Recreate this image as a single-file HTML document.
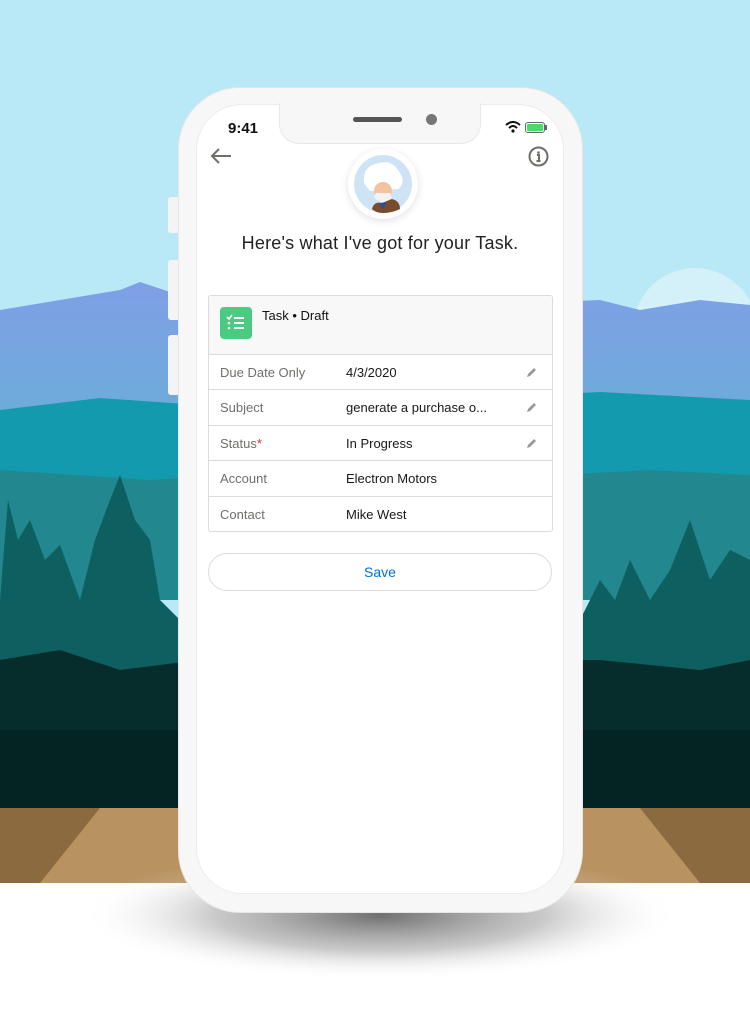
<!DOCTYPE html>
<html><head><meta charset="utf-8"><style>
*{margin:0;padding:0;box-sizing:border-box}
body{width:750px;height:1012px;overflow:hidden;background:#fff;font-family:"Liberation Sans",sans-serif;position:relative}
.abs{position:absolute}
.row{position:absolute;left:0;right:0;height:36px;border-top:1px solid #dddbda;font-size:13px}
.row .l{position:absolute;left:11px;top:10px;color:#706e6b}
.row .v{position:absolute;left:137px;top:10px;color:#181818}
.row svg{position:absolute;right:14px;top:11px}
</style></head><body>
<svg class="abs" style="left:0;top:0" width="750" height="1012">
<defs>
<radialGradient id="sh" cx="50%" cy="50%" r="50%"><stop offset="0" stop-color="#555" stop-opacity=".85"/><stop offset=".55" stop-color="#888" stop-opacity=".45"/><stop offset="1" stop-color="#fff" stop-opacity="0"/></radialGradient>
<linearGradient id="m1" x1="0" y1="0" x2="0" y2="1"><stop offset="0" stop-color="#7f9fe6"/><stop offset="1" stop-color="#6aaed8"/></linearGradient>
</defs>
<rect width="750" height="883" fill="#b9e9f6"/>
<circle cx="695" cy="330" r="62" fill="#d4f1fa"/>
<path d="M0 310 L60 300 L120 290 L140 282 L170 292 L260 310 L380 300 L480 305 L600 300 L640 310 L700 300 L750 305 L750 440 L0 440Z" fill="url(#m1)"/>
<path d="M0 410 L100 398 L200 405 L300 395 L450 400 L600 392 L750 400 L750 520 L0 520Z" fill="#149aae"/>
<path d="M0 470 L150 480 L300 470 L500 478 L650 470 L750 475 L750 600 L0 600Z" fill="#22878f"/>
<path d="M0 600 L8 500 L18 540 L30 520 L45 560 L60 545 L80 600 L95 540 L110 500 L120 475 L135 520 L150 540 L160 600 L180 620 L180 700 L0 700Z" fill="#0e5f60"/>
<path d="M580 620 L600 580 L615 600 L630 560 L650 600 L670 570 L690 520 L710 580 L730 550 L750 560 L750 700 L580 700Z" fill="#0e5f60"/>
<path d="M0 660 L60 650 L120 670 L200 660 L600 660 L700 670 L750 660 L750 810 L0 810Z" fill="#062c2c"/>
<path d="M0 730 L750 730 L750 810 L0 810Z" fill="#042424"/>
<rect y="808" width="750" height="75" fill="#b8925f"/>
<path d="M0 808 L100 808 L40 883 L0 883Z" fill="#8c6a40"/>
<path d="M640 808 L750 808 L750 883 L700 883Z" fill="#8c6a40"/>
<ellipse cx="380" cy="915" rx="300" ry="65" fill="url(#sh)"/>
</svg>
<div class="abs" style="left:168px;top:197px;width:12px;height:36px;background:#f4f4f4;border-radius:3px"></div>
<div class="abs" style="left:168px;top:260px;width:12px;height:60px;background:#f4f4f4;border-radius:3px"></div>
<div class="abs" style="left:168px;top:335px;width:12px;height:60px;background:#f4f4f4;border-radius:3px"></div>
<div class="abs" style="left:178px;top:87px;width:405px;height:826px;background:#f7f7f7;border-radius:62px;border:1px solid #e6e6e6"></div>
<div class="abs" style="left:196px;top:104px;width:368px;height:790px;background:#fff;border-radius:46px;border:1px solid #ececec"></div>
<div class="abs" style="left:279px;top:103px;width:202px;height:41px;background:#f7f7f7;border-radius:0 0 20px 20px;border:1px solid #e8e8e8;border-top:none"></div>
<div class="abs" style="left:353px;top:117px;width:49px;height:5px;background:#555;border-radius:3px"></div>
<div class="abs" style="left:426px;top:114px;width:11px;height:11px;background:#777;border-radius:50%"></div>
<div class="abs" style="left:228px;top:120px;font-size:15px;font-weight:bold;color:#111">9:41</div>
<svg class="abs" style="left:505px;top:121px" width="16" height="12" viewBox="0 0 16 12"><path d="M1 4 Q8 -2 15 4" stroke="#111" stroke-width="2" fill="none"/><path d="M4 7 Q8 3 12 7" stroke="#111" stroke-width="2" fill="none"/><circle cx="8" cy="10" r="1.6" fill="#111"/></svg>
<div class="abs" style="left:525px;top:122px;width:20px;height:11px;border:1px solid #666;border-radius:3px;padding:1px"><div style="width:100%;height:100%;background:#4cd964;border-radius:1px"></div></div>
<div class="abs" style="left:545px;top:125px;width:2px;height:5px;background:#666"></div>
<svg class="abs" style="left:209px;top:147px" width="24" height="18" viewBox="0 0 24 18"><path d="M22 9H3M10 2L3 9l7 7" stroke="#706e6b" stroke-width="2" fill="none"/></svg>
<svg class="abs" style="left:528px;top:146px" width="21" height="21" viewBox="0 0 21 21"><circle cx="10.5" cy="10.5" r="9" stroke="#706e6b" stroke-width="2" fill="none"/><circle cx="10.5" cy="6.5" r="1.3" fill="#706e6b"/><path d="M9 9h2v6M8.5 15h4" stroke="#706e6b" stroke-width="2" fill="none"/></svg>
<div class="abs" style="left:348px;top:149px;width:70px;height:70px;border-radius:50%;background:#fff;box-shadow:0 2px 8px rgba(0,0,0,.12)"></div>
<svg class="abs" style="left:352px;top:153px" width="62" height="62" viewBox="0 0 62 62"><circle cx="31" cy="31" r="29" fill="#cfe3f7"/><path d="M12 30 Q10 12 28 10 Q40 6 48 20 Q54 30 46 36 L18 38Z" fill="#fff"/><ellipse cx="31" cy="38" rx="9" ry="9" fill="#f2c3a0"/><path d="M22 44 Q31 54 40 44 L38 40 L24 40Z" fill="#f3f3f3"/><path d="M20 56 Q22 48 30 50 L40 46 Q48 48 48 56 Q40 60 31 60 Q24 60 20 56Z" fill="#7a4b2a"/><path d="M27 50 L31 56 L35 50Z" fill="#2a4d9c"/></svg>
<div class="abs" style="left:197px;top:233px;width:366px;text-align:center;font-size:18px;color:#222;letter-spacing:0.2px">Here's what I've got for your Task.</div>
<div class="abs" style="left:208px;top:295px;width:345px;height:237px;border:1px solid #dddbda;border-radius:3px;overflow:hidden">
 <div style="position:absolute;left:0;right:0;top:0;height:58px;background:#f8f8f8"></div>
 <div style="position:absolute;left:11px;top:11px;width:32px;height:32px;background:#4bca81;border-radius:4px"></div>
 <svg style="position:absolute;left:17px;top:17px" width="20" height="20" viewBox="0 0 20 20"><path d="M1 4l2 2 3-4" stroke="#fff" stroke-width="1.6" fill="none"/><path d="M8 5h10M8 10h10M8 15h10" stroke="#fff" stroke-width="2"/><circle cx="3" cy="10" r="1.3" fill="#fff"/><circle cx="3" cy="15" r="1.3" fill="#fff"/></svg>
 <div style="position:absolute;left:53px;top:12px;font-size:13px;color:#111">Task • Draft</div>
 <div class="row" style="top:58px"><span class="l">Due Date Only</span><span class="v">4/3/2020</span><svg width="13" height="13" viewBox="0 0 13 13"><path d="M2 11l1-3 6-6 2 2-6 6z" fill="#999"/></svg></div>
 <div class="row" style="top:93px"><span class="l">Subject</span><span class="v">generate a purchase o...</span><svg width="13" height="13" viewBox="0 0 13 13"><path d="M2 11l1-3 6-6 2 2-6 6z" fill="#999"/></svg></div>
 <div class="row" style="top:129px"><span class="l">Status<span style="color:#c23934">*</span></span><span class="v">In Progress</span><svg width="13" height="13" viewBox="0 0 13 13"><path d="M2 11l1-3 6-6 2 2-6 6z" fill="#999"/></svg></div>
 <div class="row" style="top:164px"><span class="l">Account</span><span class="v">Electron Motors</span></div>
 <div class="row" style="top:200px"><span class="l">Contact</span><span class="v">Mike West</span></div>
</div>
<div class="abs" style="left:208px;top:553px;width:344px;height:38px;border:1px solid #dddbda;border-radius:19px;text-align:center;line-height:36px;font-size:14px;color:#0070d2">Save</div>
</body></html>
